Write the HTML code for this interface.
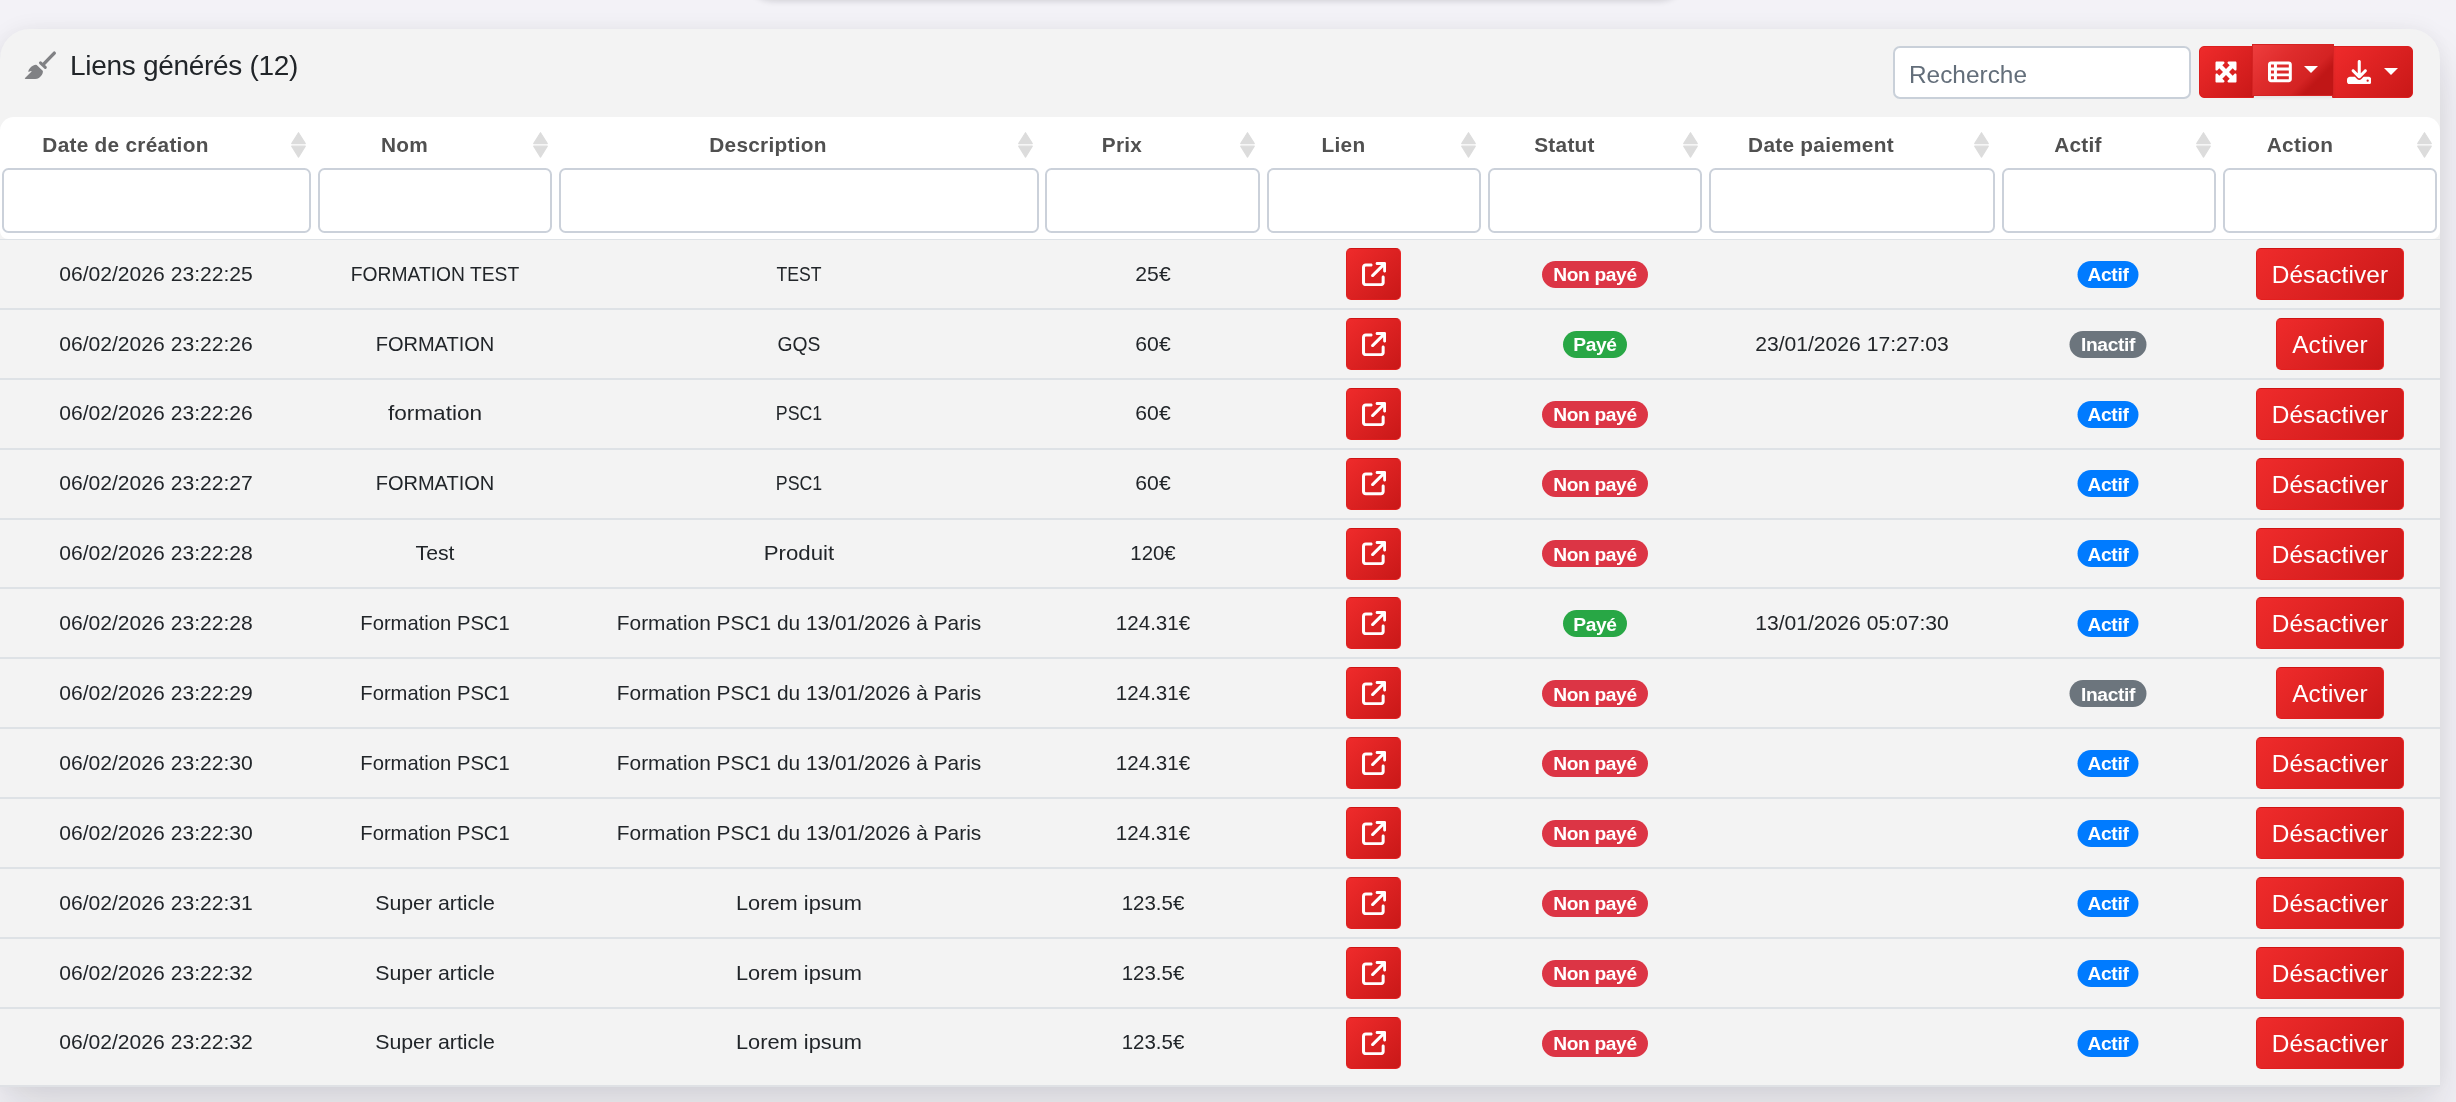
<!DOCTYPE html>
<html lang="fr"><head><meta charset="utf-8"><title>Liens générés</title>
<style>
*{box-sizing:border-box;margin:0;padding:0}
html,body{width:2456px;height:1102px;overflow:hidden}
body{position:relative;background:#f3f2f7;font-family:"Liberation Sans",sans-serif;color:#212529}
.topshadow{position:absolute;left:744px;top:-40px;width:944px;height:40px;border-radius:0 0 30px 30px;background:#fff;box-shadow:0 1px 6px rgba(20,20,30,.16)}
.card{position:absolute;left:0;top:29px;width:2440px;height:1056px;background:#f3f3f3;border-radius:30px 30px 0 0;box-shadow:0 2px 0 #dfe1e5,0 30px 50px rgba(20,20,35,.125),0 0 22px rgba(30,25,60,.06)}
.abs{position:absolute}
.title{position:absolute;left:70px;top:48px;font-size:28px;line-height:36px;color:#212529;white-space:nowrap;letter-spacing:-0.3px}
.broom{position:absolute;left:20px;top:46px;width:44px;height:40px;fill:#808184;stroke:#808184}
.search{position:absolute;left:1893px;top:46px;width:297.500px;height:53px;border:2px solid #c9d0d9;border-radius:7px;background:#fff;font-size:24.400px;line-height:54.400px;padding-left:14px;color:#636e7a;white-space:nowrap}
.tb{position:absolute;top:46px;height:52px;background:linear-gradient(135deg,#ef2b2b 0%,#c91818 100%);border:1px solid #dc1f1f}
.tb svg{position:absolute;fill:#fff}
.tb1{left:2199px;width:55px;border-radius:5px 0 0 5px}
.tb2{left:2252px;width:82px;top:44px;background:linear-gradient(135deg,#ee3d3d 0%,#df2c2c 35%,#d42323 66%,#c01616 77%,#c01616 100%);box-shadow:0 2px 3px rgba(0,0,0,.06);border-color:#d52323}
.tb3{left:2332px;width:81px;border-radius:0 5px 5px 0}
.caret{position:absolute;width:0;height:0;border-left:7px solid transparent;border-right:7px solid transparent;border-top:7px solid #fff}
.thead{position:absolute;left:0;top:117px;width:2440px;height:121.500px;background:#fff;border-radius:14px 14px 8px 8px}
.hline{position:absolute;left:0;width:2440px;height:2px;background:#dee2e6}
.th{position:absolute;top:130.300px;height:30px;line-height:30px;font-size:20.800px;font-weight:700;color:#505050;white-space:nowrap;transform:translateX(-50%);letter-spacing:0.28px}
.sort{position:absolute;top:131px;width:17px;height:28px}
.sort svg{width:17px;height:28px;fill:#dcdcdc;stroke:#dcdcdc;stroke-width:1.200;stroke-linejoin:round;display:block}
.fi{position:absolute;top:167.700px;height:65.200px;border:2px solid #cbd1da;border-radius:6.500px;background:#fff}
.c{position:absolute;height:30px;line-height:30px;font-size:20.800px;white-space:nowrap;transform:translateX(-50%);color:#212529}
.lb{position:absolute;left:1346px;width:55px;height:52px;border-radius:5px;background:linear-gradient(135deg,#ef2b2b 0%,#c91818 100%);border:1px solid #dc1f1f}
.ico-ext{position:absolute;left:14.800px;top:12.800px;width:24.200px;height:24.200px;fill:#fff}
.badge{position:absolute;height:27px;line-height:27px;border-radius:14px;color:#fff;font-weight:700;font-size:19.200px;text-align:center;white-space:nowrap;transform:translateX(-50%);letter-spacing:-0.35px;padding-top:0.500px}
.b-np{background:#dc3545;width:106px}
.b-p{background:#28a745;width:64px}
.b-a{background:#007bff;width:61px}
.b-i{background:#6c757d;width:77px}
.ab,.lb{border-top-color:#d01313 !important;border-right-color:#ea2626 !important;border-bottom-color:#e31f1f !important}
.ab{position:absolute;height:52px;line-height:51.600px;letter-spacing:0.15px;border-radius:5px;background:linear-gradient(135deg,#ef2b2b 0%,#c91818 100%);border:1px solid #dc1f1f;color:#fff;font-size:24.400px;text-align:center;white-space:nowrap;transform:translateX(-50%)}
.ab-d{width:148px}
.ab-a{width:108px}
#w{position:absolute;left:0;top:0;width:2456px;height:1102px;overflow:hidden;will-change:transform}
</style></head><body><div id="w">
<div class="topshadow"></div>
<div class="card"></div>

<svg class="broom" viewBox="20 46 44 40"><path stroke="none" d="M36.700 64.900 L42.700 70.700 Q43.100 71.300 42.900 72.100 Q42.600 74 41.800 75 Q40.700 76.800 38.900 77.900 Q37.200 78.900 35.200 79 L25.800 79 Q24.400 79 24.900 78.100 Q25 77.900 31.600 71.400 Q31.600 70.800 31 71 L28.350 71.950 Q28.300 70.500 29.100 69.200 Q30 67.700 31.250 66.700 Q32.800 65.500 34.500 65.050 Q35.800 64.700 36.700 64.900 Z"/><path fill="none" stroke-width="3.400" stroke-linecap="round" d="M54.300 53.100 L43.600 64.100"/><path fill="none" stroke-width="3" stroke-linecap="round" d="M40.500 62.800 L45.300 67.400"/></svg>
<div class="title">Liens générés (12)</div>
<div class="search">Recherche</div>
<div class="tb tb1"><svg style="left:14.250px;top:13.250px;width:24px;height:24px" viewBox="0 0 512 512"><path d="M200 32H56C42.700 32 32 42.700 32 56V200c0 9.700 5.800 18.500 14.800 22.200s19.300 1.700 26.200-5.200l40-40 79 79-79 79L73 295c-6.900-6.900-17.200-8.900-26.200-5.200S32 302.300 32 312V456c0 13.300 10.700 24 24 24H200c9.700 0 18.500-5.800 22.200-14.800s1.700-19.300-5.200-26.200l-40-40 79-79 79 79-40 40c-6.900 6.900-8.900 17.200-5.200 26.200s12.500 14.800 22.200 14.800H456c13.300 0 24-10.700 24-24V312c0-9.700-5.800-18.500-14.800-22.200s-19.300-1.700-26.200 5.200l-40 40-79-79 79-79 40 40c6.900 6.900 17.200 8.900 26.200 5.200s14.800-12.500 14.800-22.200V56c0-13.300-10.700-24-24-24H312c-9.700 0-18.500 5.800-22.200 14.800s-1.700 19.300 5.200 26.200l40 40-79 79-79-79 40-40c6.900-6.900 8.900-17.200 5.200-26.200S209.700 32 200 32z"/></svg></div>
<div class="tb tb3"><svg style="left:13.500px;top:12.700px;width:24.500px;height:24.500px" viewBox="0 0 512 512"><path d="M288 32c0-17.700-14.300-32-32-32s-32 14.300-32 32V274.700l-73.400-73.400c-12.500-12.500-32.800-12.500-45.300 0s-12.500 32.800 0 45.300l128 128c12.500 12.500 32.800 12.500 45.300 0l128-128c12.500-12.500 12.500-32.800 0-45.300s-32.800-12.500-45.300 0L288 274.700V32zM64 352c-35.300 0-64 28.700-64 64v32c0 35.300 28.700 64 64 64H448c35.300 0 64-28.700 64-64V416c0-35.300-28.700-64-64-64H346.500l-45.300 45.300c-25 25-65.500 25-90.500 0L165.500 352H64zm368 56a24 24 0 1 1 0 48 24 24 0 1 1 0-48z"/></svg><div class="caret" style="left:51px;top:21.200px"></div></div>
<div class="tb tb2"><svg style="left:15px;top:14.700px;width:23.800px;height:23.800px" viewBox="0 0 512 512"><path d="M0 96C0 60.700 28.700 32 64 32H448c35.300 0 64 28.700 64 64V416c0 35.300-28.700 64-64 64H64c-35.300 0-64-28.700-64-64V96zm64 0v64h64V96H64zm384 0H192v64H448V96zM64 224v64h64V224H64zm384 0H192v64H448V224zM64 352v64h64V352H64zm384 0H192v64H448V352z"/></svg><div class="caret" style="left:50.500px;top:20.900px"></div></div>
<div class="thead"></div>
<div class="hline" style="top:238.600px;height:1.400px"></div>
<div class="th" style="left:125.5px">Date de création</div>
<div class="sort" style="left:290.3px"><svg viewBox="0 0 17 28"><path d="M8.500 1.700 L15.300 12.600 L1.700 12.600 Z M8.500 26.100 L15.300 15.200 L1.700 15.200 Z"/></svg></div>
<div class="fi" style="left:2px;width:309px"></div>
<div class="th" style="left:404.5px">Nom</div>
<div class="sort" style="left:531.8px"><svg viewBox="0 0 17 28"><path d="M8.500 1.700 L15.300 12.600 L1.700 12.600 Z M8.500 26.100 L15.300 15.200 L1.700 15.200 Z"/></svg></div>
<div class="fi" style="left:318px;width:234px"></div>
<div class="th" style="left:768.0px">Description</div>
<div class="sort" style="left:1017.0px"><svg viewBox="0 0 17 28"><path d="M8.500 1.700 L15.300 12.600 L1.700 12.600 Z M8.500 26.100 L15.300 15.200 L1.700 15.200 Z"/></svg></div>
<div class="fi" style="left:559px;width:480px"></div>
<div class="th" style="left:1122.0px">Prix</div>
<div class="sort" style="left:1238.5px"><svg viewBox="0 0 17 28"><path d="M8.500 1.700 L15.300 12.600 L1.700 12.600 Z M8.500 26.100 L15.300 15.200 L1.700 15.200 Z"/></svg></div>
<div class="fi" style="left:1045px;width:215px"></div>
<div class="th" style="left:1343.5px">Lien</div>
<div class="sort" style="left:1460.0px"><svg viewBox="0 0 17 28"><path d="M8.500 1.700 L15.300 12.600 L1.700 12.600 Z M8.500 26.100 L15.300 15.200 L1.700 15.200 Z"/></svg></div>
<div class="fi" style="left:1267px;width:214px"></div>
<div class="th" style="left:1564.5px">Statut</div>
<div class="sort" style="left:1681.5px"><svg viewBox="0 0 17 28"><path d="M8.500 1.700 L15.300 12.600 L1.700 12.600 Z M8.500 26.100 L15.300 15.200 L1.700 15.200 Z"/></svg></div>
<div class="fi" style="left:1488px;width:214px"></div>
<div class="th" style="left:1821.0px">Date paiement</div>
<div class="sort" style="left:1973.0px"><svg viewBox="0 0 17 28"><path d="M8.500 1.700 L15.300 12.600 L1.700 12.600 Z M8.500 26.100 L15.300 15.200 L1.700 15.200 Z"/></svg></div>
<div class="fi" style="left:1709px;width:286px"></div>
<div class="th" style="left:2078.0px">Actif</div>
<div class="sort" style="left:2194.5px"><svg viewBox="0 0 17 28"><path d="M8.500 1.700 L15.300 12.600 L1.700 12.600 Z M8.500 26.100 L15.300 15.200 L1.700 15.200 Z"/></svg></div>
<div class="fi" style="left:2002px;width:214px"></div>
<div class="th" style="left:2300.0px">Action</div>
<div class="sort" style="left:2416.0px"><svg viewBox="0 0 17 28"><path d="M8.500 1.700 L15.300 12.600 L1.700 12.600 Z M8.500 26.100 L15.300 15.200 L1.700 15.200 Z"/></svg></div>
<div class="fi" style="left:2223px;width:214px"></div>
<div class="hline" style="top:307.89px"></div>
<div class="c" style="left:156.1px;top:258.64px;transform:translateX(-50%) scaleX(1.015)">06/02/2026 23:22:25</div>
<div class="c" style="left:435.1px;top:258.64px;transform:translateX(-50%) scaleX(0.926)">FORMATION TEST</div>
<div class="c" style="left:798.6px;top:258.64px;transform:translateX(-50%) scaleX(0.848)">TEST</div>
<div class="c" style="left:1152.6px;top:258.64px;transform:translateX(-50%) scaleX(1.018)">25€</div>
<div class="lb" style="top:247.94px"><svg class="ico-ext" viewBox="0 0 512 512"><path d="M320 0c-17.7 0-32 14.3-32 32s14.300 32 32 32h82.700L201.400 265.400c-12.500 12.500-12.500 32.800 0 45.300s32.800 12.500 45.300 0L448 109.300V192c0 17.700 14.300 32 32 32s32-14.300 32-32V32c0-17.700-14.300-32-32-32H320zM80 32C35.800 32 0 67.800 0 112V432c0 44.200 35.800 80 80 80H400c44.200 0 80-35.800 80-80V320c0-17.700-14.300-32-32-32s-32 14.300-32 32V432c0 8.800-7.200 16-16 16H80c-8.800 0-16-7.200-16-16V112c0-8.800 7.200-16 16-16H192c17.700 0 32-14.300 32-32s-14.300-32-32-32H80z"/></svg></div>
<div class="badge b-np" style="left:1595.0px;top:260.75px">Non payé</div>
<div class="badge b-a" style="left:2108px;top:260.75px">Actif</div>
<div class="ab ab-d" style="left:2330px;top:247.94px">Désactiver</div>
<div class="hline" style="top:377.78px"></div>
<div class="c" style="left:156.1px;top:328.53px;transform:translateX(-50%) scaleX(1.015)">06/02/2026 23:22:26</div>
<div class="c" style="left:435.1px;top:328.53px;transform:translateX(-50%) scaleX(0.963)">FORMATION</div>
<div class="c" style="left:798.6px;top:328.53px;transform:translateX(-50%) scaleX(0.928)">GQS</div>
<div class="c" style="left:1152.6px;top:328.53px;transform:translateX(-50%) scaleX(1.018)">60€</div>
<div class="c" style="left:1851.6px;top:328.53px;transform:translateX(-50%) scaleX(1.015)">23/01/2026 17:27:03</div>
<div class="lb" style="top:317.83px"><svg class="ico-ext" viewBox="0 0 512 512"><path d="M320 0c-17.7 0-32 14.3-32 32s14.300 32 32 32h82.700L201.400 265.400c-12.500 12.500-12.500 32.800 0 45.300s32.800 12.500 45.300 0L448 109.300V192c0 17.700 14.300 32 32 32s32-14.300 32-32V32c0-17.700-14.300-32-32-32H320zM80 32C35.800 32 0 67.800 0 112V432c0 44.200 35.800 80 80 80H400c44.200 0 80-35.800 80-80V320c0-17.700-14.300-32-32-32s-32 14.300-32 32V432c0 8.800-7.200 16-16 16H80c-8.800 0-16-7.200-16-16V112c0-8.800 7.200-16 16-16H192c17.700 0 32-14.300 32-32s-14.300-32-32-32H80z"/></svg></div>
<div class="badge b-p" style="left:1595.0px;top:330.63px">Payé</div>
<div class="badge b-i" style="left:2108px;top:330.63px">Inactif</div>
<div class="ab ab-a" style="left:2330px;top:317.83px">Activer</div>
<div class="hline" style="top:447.67px"></div>
<div class="c" style="left:156.1px;top:398.42px;transform:translateX(-50%) scaleX(1.015)">06/02/2026 23:22:26</div>
<div class="c" style="left:435.1px;top:398.42px;transform:translateX(-50%) scaleX(1.087)">formation</div>
<div class="c" style="left:798.6px;top:398.42px;transform:translateX(-50%) scaleX(0.854)">PSC1</div>
<div class="c" style="left:1152.6px;top:398.42px;transform:translateX(-50%) scaleX(1.018)">60€</div>
<div class="lb" style="top:387.72px"><svg class="ico-ext" viewBox="0 0 512 512"><path d="M320 0c-17.7 0-32 14.3-32 32s14.300 32 32 32h82.700L201.400 265.400c-12.500 12.500-12.500 32.800 0 45.300s32.800 12.500 45.300 0L448 109.300V192c0 17.700 14.300 32 32 32s32-14.300 32-32V32c0-17.700-14.300-32-32-32H320zM80 32C35.800 32 0 67.800 0 112V432c0 44.200 35.800 80 80 80H400c44.200 0 80-35.800 80-80V320c0-17.700-14.300-32-32-32s-32 14.300-32 32V432c0 8.800-7.200 16-16 16H80c-8.800 0-16-7.200-16-16V112c0-8.800 7.200-16 16-16H192c17.700 0 32-14.300 32-32s-14.300-32-32-32H80z"/></svg></div>
<div class="badge b-np" style="left:1595.0px;top:400.52px">Non payé</div>
<div class="badge b-a" style="left:2108px;top:400.52px">Actif</div>
<div class="ab ab-d" style="left:2330px;top:387.72px">Désactiver</div>
<div class="hline" style="top:517.56px"></div>
<div class="c" style="left:156.1px;top:468.31px;transform:translateX(-50%) scaleX(1.015)">06/02/2026 23:22:27</div>
<div class="c" style="left:435.1px;top:468.31px;transform:translateX(-50%) scaleX(0.963)">FORMATION</div>
<div class="c" style="left:798.6px;top:468.31px;transform:translateX(-50%) scaleX(0.854)">PSC1</div>
<div class="c" style="left:1152.6px;top:468.31px;transform:translateX(-50%) scaleX(1.018)">60€</div>
<div class="lb" style="top:457.62px"><svg class="ico-ext" viewBox="0 0 512 512"><path d="M320 0c-17.7 0-32 14.3-32 32s14.300 32 32 32h82.700L201.400 265.400c-12.500 12.500-12.500 32.800 0 45.300s32.800 12.500 45.300 0L448 109.300V192c0 17.700 14.300 32 32 32s32-14.300 32-32V32c0-17.700-14.300-32-32-32H320zM80 32C35.800 32 0 67.800 0 112V432c0 44.200 35.800 80 80 80H400c44.200 0 80-35.800 80-80V320c0-17.700-14.300-32-32-32s-32 14.300-32 32V432c0 8.800-7.200 16-16 16H80c-8.800 0-16-7.200-16-16V112c0-8.800 7.200-16 16-16H192c17.700 0 32-14.300 32-32s-14.300-32-32-32H80z"/></svg></div>
<div class="badge b-np" style="left:1595.0px;top:470.42px">Non payé</div>
<div class="badge b-a" style="left:2108px;top:470.42px">Actif</div>
<div class="ab ab-d" style="left:2330px;top:457.62px">Désactiver</div>
<div class="hline" style="top:587.45px"></div>
<div class="c" style="left:156.1px;top:538.21px;transform:translateX(-50%) scaleX(1.015)">06/02/2026 23:22:28</div>
<div class="c" style="left:435.1px;top:538.21px;transform:translateX(-50%) scaleX(1.021)">Test</div>
<div class="c" style="left:798.6px;top:538.21px;transform:translateX(-50%) scaleX(1.068)">Produit</div>
<div class="c" style="left:1152.6px;top:538.21px;transform:translateX(-50%) scaleX(0.980)">120€</div>
<div class="lb" style="top:527.50px"><svg class="ico-ext" viewBox="0 0 512 512"><path d="M320 0c-17.7 0-32 14.3-32 32s14.300 32 32 32h82.700L201.400 265.400c-12.500 12.500-12.500 32.800 0 45.300s32.800 12.500 45.300 0L448 109.300V192c0 17.700 14.300 32 32 32s32-14.300 32-32V32c0-17.700-14.300-32-32-32H320zM80 32C35.800 32 0 67.800 0 112V432c0 44.200 35.800 80 80 80H400c44.200 0 80-35.800 80-80V320c0-17.700-14.300-32-32-32s-32 14.300-32 32V432c0 8.800-7.200 16-16 16H80c-8.800 0-16-7.200-16-16V112c0-8.800 7.200-16 16-16H192c17.700 0 32-14.300 32-32s-14.300-32-32-32H80z"/></svg></div>
<div class="badge b-np" style="left:1595.0px;top:540.30px">Non payé</div>
<div class="badge b-a" style="left:2108px;top:540.30px">Actif</div>
<div class="ab ab-d" style="left:2330px;top:527.50px">Désactiver</div>
<div class="hline" style="top:657.34px"></div>
<div class="c" style="left:156.1px;top:608.10px;transform:translateX(-50%) scaleX(1.015)">06/02/2026 23:22:28</div>
<div class="c" style="left:435.1px;top:608.10px;transform:translateX(-50%) scaleX(0.972)">Formation PSC1</div>
<div class="c" style="left:798.6px;top:608.10px;transform:translateX(-50%) scaleX(1.004)">Formation PSC1 du 13/01/2026 à Paris</div>
<div class="c" style="left:1152.6px;top:608.10px;transform:translateX(-50%) scaleX(0.988)">124.31€</div>
<div class="c" style="left:1851.6px;top:608.10px;transform:translateX(-50%) scaleX(1.015)">13/01/2026 05:07:30</div>
<div class="lb" style="top:597.40px"><svg class="ico-ext" viewBox="0 0 512 512"><path d="M320 0c-17.7 0-32 14.3-32 32s14.300 32 32 32h82.700L201.400 265.400c-12.500 12.500-12.500 32.800 0 45.300s32.800 12.500 45.300 0L448 109.300V192c0 17.700 14.300 32 32 32s32-14.300 32-32V32c0-17.700-14.300-32-32-32H320zM80 32C35.800 32 0 67.800 0 112V432c0 44.200 35.800 80 80 80H400c44.200 0 80-35.800 80-80V320c0-17.700-14.300-32-32-32s-32 14.300-32 32V432c0 8.800-7.200 16-16 16H80c-8.800 0-16-7.200-16-16V112c0-8.800 7.200-16 16-16H192c17.700 0 32-14.300 32-32s-14.300-32-32-32H80z"/></svg></div>
<div class="badge b-p" style="left:1595.0px;top:610.20px">Payé</div>
<div class="badge b-a" style="left:2108px;top:610.20px">Actif</div>
<div class="ab ab-d" style="left:2330px;top:597.40px">Désactiver</div>
<div class="hline" style="top:727.23px"></div>
<div class="c" style="left:156.1px;top:677.99px;transform:translateX(-50%) scaleX(1.015)">06/02/2026 23:22:29</div>
<div class="c" style="left:435.1px;top:677.99px;transform:translateX(-50%) scaleX(0.972)">Formation PSC1</div>
<div class="c" style="left:798.6px;top:677.99px;transform:translateX(-50%) scaleX(1.004)">Formation PSC1 du 13/01/2026 à Paris</div>
<div class="c" style="left:1152.6px;top:677.99px;transform:translateX(-50%) scaleX(0.988)">124.31€</div>
<div class="lb" style="top:667.29px"><svg class="ico-ext" viewBox="0 0 512 512"><path d="M320 0c-17.7 0-32 14.3-32 32s14.300 32 32 32h82.700L201.400 265.400c-12.500 12.500-12.500 32.800 0 45.300s32.800 12.500 45.300 0L448 109.300V192c0 17.700 14.300 32 32 32s32-14.300 32-32V32c0-17.700-14.300-32-32-32H320zM80 32C35.800 32 0 67.800 0 112V432c0 44.200 35.800 80 80 80H400c44.200 0 80-35.800 80-80V320c0-17.700-14.300-32-32-32s-32 14.300-32 32V432c0 8.800-7.200 16-16 16H80c-8.800 0-16-7.200-16-16V112c0-8.800 7.200-16 16-16H192c17.700 0 32-14.300 32-32s-14.300-32-32-32H80z"/></svg></div>
<div class="badge b-np" style="left:1595.0px;top:680.09px">Non payé</div>
<div class="badge b-i" style="left:2108px;top:680.09px">Inactif</div>
<div class="ab ab-a" style="left:2330px;top:667.29px">Activer</div>
<div class="hline" style="top:797.12px"></div>
<div class="c" style="left:156.1px;top:747.88px;transform:translateX(-50%) scaleX(1.015)">06/02/2026 23:22:30</div>
<div class="c" style="left:435.1px;top:747.88px;transform:translateX(-50%) scaleX(0.972)">Formation PSC1</div>
<div class="c" style="left:798.6px;top:747.88px;transform:translateX(-50%) scaleX(1.004)">Formation PSC1 du 13/01/2026 à Paris</div>
<div class="c" style="left:1152.6px;top:747.88px;transform:translateX(-50%) scaleX(0.988)">124.31€</div>
<div class="lb" style="top:737.18px"><svg class="ico-ext" viewBox="0 0 512 512"><path d="M320 0c-17.7 0-32 14.3-32 32s14.300 32 32 32h82.700L201.400 265.400c-12.500 12.500-12.500 32.800 0 45.300s32.800 12.500 45.300 0L448 109.300V192c0 17.700 14.300 32 32 32s32-14.300 32-32V32c0-17.700-14.300-32-32-32H320zM80 32C35.800 32 0 67.800 0 112V432c0 44.200 35.800 80 80 80H400c44.200 0 80-35.800 80-80V320c0-17.700-14.300-32-32-32s-32 14.300-32 32V432c0 8.800-7.200 16-16 16H80c-8.800 0-16-7.200-16-16V112c0-8.800 7.200-16 16-16H192c17.700 0 32-14.300 32-32s-14.300-32-32-32H80z"/></svg></div>
<div class="badge b-np" style="left:1595.0px;top:749.98px">Non payé</div>
<div class="badge b-a" style="left:2108px;top:749.98px">Actif</div>
<div class="ab ab-d" style="left:2330px;top:737.18px">Désactiver</div>
<div class="hline" style="top:867.01px"></div>
<div class="c" style="left:156.1px;top:817.77px;transform:translateX(-50%) scaleX(1.015)">06/02/2026 23:22:30</div>
<div class="c" style="left:435.1px;top:817.77px;transform:translateX(-50%) scaleX(0.972)">Formation PSC1</div>
<div class="c" style="left:798.6px;top:817.77px;transform:translateX(-50%) scaleX(1.004)">Formation PSC1 du 13/01/2026 à Paris</div>
<div class="c" style="left:1152.6px;top:817.77px;transform:translateX(-50%) scaleX(0.988)">124.31€</div>
<div class="lb" style="top:807.07px"><svg class="ico-ext" viewBox="0 0 512 512"><path d="M320 0c-17.7 0-32 14.3-32 32s14.300 32 32 32h82.700L201.400 265.400c-12.500 12.500-12.500 32.800 0 45.300s32.800 12.500 45.300 0L448 109.300V192c0 17.700 14.300 32 32 32s32-14.300 32-32V32c0-17.700-14.300-32-32-32H320zM80 32C35.800 32 0 67.800 0 112V432c0 44.200 35.800 80 80 80H400c44.200 0 80-35.800 80-80V320c0-17.700-14.300-32-32-32s-32 14.300-32 32V432c0 8.800-7.200 16-16 16H80c-8.800 0-16-7.200-16-16V112c0-8.800 7.200-16 16-16H192c17.700 0 32-14.300 32-32s-14.300-32-32-32H80z"/></svg></div>
<div class="badge b-np" style="left:1595.0px;top:819.87px">Non payé</div>
<div class="badge b-a" style="left:2108px;top:819.87px">Actif</div>
<div class="ab ab-d" style="left:2330px;top:807.07px">Désactiver</div>
<div class="hline" style="top:936.90px"></div>
<div class="c" style="left:156.1px;top:887.66px;transform:translateX(-50%) scaleX(1.015)">06/02/2026 23:22:31</div>
<div class="c" style="left:435.1px;top:887.66px;transform:translateX(-50%) scaleX(1.025)">Super article</div>
<div class="c" style="left:798.6px;top:887.66px;transform:translateX(-50%) scaleX(1.049)">Lorem ipsum</div>
<div class="c" style="left:1152.6px;top:887.66px;transform:translateX(-50%) scaleX(0.983)">123.5€</div>
<div class="lb" style="top:876.96px"><svg class="ico-ext" viewBox="0 0 512 512"><path d="M320 0c-17.7 0-32 14.3-32 32s14.300 32 32 32h82.700L201.400 265.400c-12.500 12.500-12.500 32.800 0 45.300s32.800 12.500 45.300 0L448 109.300V192c0 17.700 14.300 32 32 32s32-14.300 32-32V32c0-17.700-14.300-32-32-32H320zM80 32C35.800 32 0 67.800 0 112V432c0 44.200 35.800 80 80 80H400c44.200 0 80-35.800 80-80V320c0-17.700-14.300-32-32-32s-32 14.300-32 32V432c0 8.800-7.200 16-16 16H80c-8.800 0-16-7.200-16-16V112c0-8.800 7.200-16 16-16H192c17.700 0 32-14.300 32-32s-14.300-32-32-32H80z"/></svg></div>
<div class="badge b-np" style="left:1595.0px;top:889.75px">Non payé</div>
<div class="badge b-a" style="left:2108px;top:889.75px">Actif</div>
<div class="ab ab-d" style="left:2330px;top:876.96px">Désactiver</div>
<div class="hline" style="top:1006.79px"></div>
<div class="c" style="left:156.1px;top:957.55px;transform:translateX(-50%) scaleX(1.015)">06/02/2026 23:22:32</div>
<div class="c" style="left:435.1px;top:957.55px;transform:translateX(-50%) scaleX(1.025)">Super article</div>
<div class="c" style="left:798.6px;top:957.55px;transform:translateX(-50%) scaleX(1.049)">Lorem ipsum</div>
<div class="c" style="left:1152.6px;top:957.55px;transform:translateX(-50%) scaleX(0.983)">123.5€</div>
<div class="lb" style="top:946.85px"><svg class="ico-ext" viewBox="0 0 512 512"><path d="M320 0c-17.7 0-32 14.3-32 32s14.300 32 32 32h82.700L201.400 265.400c-12.500 12.500-12.500 32.800 0 45.300s32.800 12.500 45.300 0L448 109.300V192c0 17.700 14.300 32 32 32s32-14.300 32-32V32c0-17.700-14.300-32-32-32H320zM80 32C35.800 32 0 67.800 0 112V432c0 44.200 35.800 80 80 80H400c44.200 0 80-35.800 80-80V320c0-17.700-14.300-32-32-32s-32 14.300-32 32V432c0 8.800-7.200 16-16 16H80c-8.800 0-16-7.200-16-16V112c0-8.800 7.200-16 16-16H192c17.700 0 32-14.300 32-32s-14.300-32-32-32H80z"/></svg></div>
<div class="badge b-np" style="left:1595.0px;top:959.64px">Non payé</div>
<div class="badge b-a" style="left:2108px;top:959.64px">Actif</div>
<div class="ab ab-d" style="left:2330px;top:946.85px">Désactiver</div>
<div class="c" style="left:156.1px;top:1027.43px;transform:translateX(-50%) scaleX(1.015)">06/02/2026 23:22:32</div>
<div class="c" style="left:435.1px;top:1027.43px;transform:translateX(-50%) scaleX(1.025)">Super article</div>
<div class="c" style="left:798.6px;top:1027.43px;transform:translateX(-50%) scaleX(1.049)">Lorem ipsum</div>
<div class="c" style="left:1152.6px;top:1027.43px;transform:translateX(-50%) scaleX(0.983)">123.5€</div>
<div class="lb" style="top:1016.73px"><svg class="ico-ext" viewBox="0 0 512 512"><path d="M320 0c-17.7 0-32 14.3-32 32s14.300 32 32 32h82.700L201.400 265.400c-12.500 12.500-12.500 32.800 0 45.300s32.800 12.500 45.300 0L448 109.300V192c0 17.700 14.300 32 32 32s32-14.300 32-32V32c0-17.700-14.300-32-32-32H320zM80 32C35.800 32 0 67.800 0 112V432c0 44.200 35.800 80 80 80H400c44.200 0 80-35.800 80-80V320c0-17.700-14.300-32-32-32s-32 14.300-32 32V432c0 8.800-7.200 16-16 16H80c-8.800 0-16-7.200-16-16V112c0-8.800 7.200-16 16-16H192c17.700 0 32-14.300 32-32s-14.300-32-32-32H80z"/></svg></div>
<div class="badge b-np" style="left:1595.0px;top:1029.53px">Non payé</div>
<div class="badge b-a" style="left:2108px;top:1029.53px">Actif</div>
<div class="ab ab-d" style="left:2330px;top:1016.73px">Désactiver</div>
</div></body></html>
